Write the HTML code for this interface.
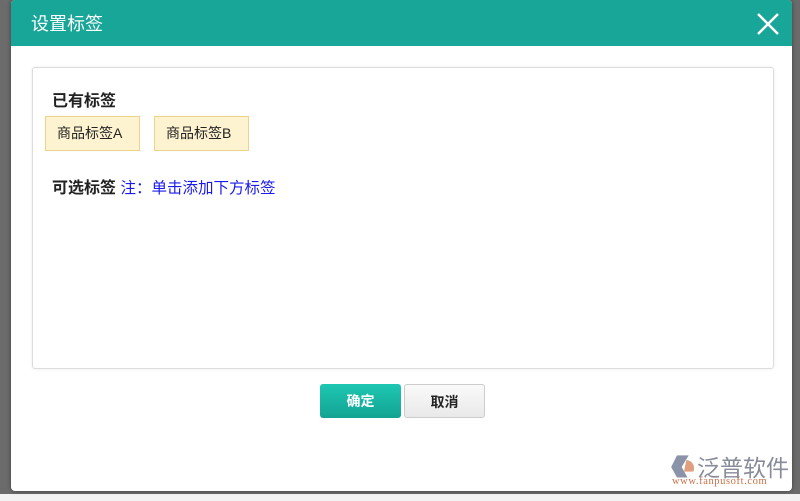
<!DOCTYPE html>
<html><head><meta charset="utf-8"><style>
*{margin:0;padding:0;box-sizing:border-box}
body{width:800px;height:501px;background:#6b6b6b;position:relative;overflow:hidden;font-family:"Liberation Sans","Noto Sans CJK SC",sans-serif}
.bot{position:absolute;left:0;top:494px;width:800px;height:7px;background:#f3f3f3}
.dlg{position:absolute;left:11px;top:0;width:781px;height:491px;background:#fff;border-radius:4px;overflow:hidden;box-shadow:0 0 4px rgba(0,0,0,.4)}
.hd{height:46px;background:#17a697;color:#fff;font-size:18px;line-height:48px;padding-left:20px}
.x{position:absolute;right:12px;top:12px;width:24px;height:24px}
.box{position:absolute;left:21px;top:67px;width:742px;height:302px;border:1px solid #ddd;border-radius:3px;box-shadow:0 0 3px rgba(0,0,0,.08)}
.t1{position:absolute;left:19px;top:19px;font-size:16px;font-weight:bold;color:#222}
.tag{position:absolute;top:48px;height:35px;border:1px solid #ecd58a;background:#fdf3d0;font-size:14px;line-height:33px;padding:0 11px;color:#222;width:95px}
.t2{position:absolute;left:19px;top:106px;font-size:16px;font-weight:bold;color:#222}
.t2 span{color:#1a1aee;font-weight:normal;font-size:15.5px}
.btn{position:absolute;top:384px;height:34px;width:81px;border-radius:3px;font-size:14px;line-height:34px;text-align:center;font-weight:bold}
.ok{left:309px;background:linear-gradient(#1ec7b2,#13a393);color:#fff}
.no{left:393px;background:linear-gradient(#fafafa,#e9e9e9);border:1px solid #ccc;color:#222}
.logo{position:absolute;top:449px;font-size:23px;color:#888b9a;letter-spacing:0}
.url{position:absolute;top:476px;font-size:10.5px;color:#c8704a;font-family:"Liberation Serif",serif;letter-spacing:.6px}
</style></head><body>
<div class="bot"></div>
<div class="dlg">
<div class="hd">设置标签</div>
<svg class="x" viewBox="0 0 24 24"><path d="M2 2L22 22M22 2L2 22" stroke="#fff" stroke-width="2.5"/></svg>
<div class="box">
<div class="t1">已有标签</div>
<div class="tag" style="left:12px">商品标签A</div>
<div class="tag" style="left:121px">商品标签B</div>
<div class="t2">可选标签 <span>注：单击添加下方标签</span></div>
</div>
<div class="btn ok">确定</div>
<div class="btn no">取消</div>
<svg style="position:absolute;left:659px;top:453px" width="28" height="28" viewBox="0 0 24 24"><path d="M6 2h10L10 12l5 9H6L1 12z" fill="#8a93a8"/><path d="M14 6a7 7 0 0 1 6 10h-8z" fill="#e0a080"/></svg>
<div class="logo" style="left:686px">泛普软件</div>
<div class="url" style="left:661px">www.fanpusoft.com</div>
</div>
</body></html>
